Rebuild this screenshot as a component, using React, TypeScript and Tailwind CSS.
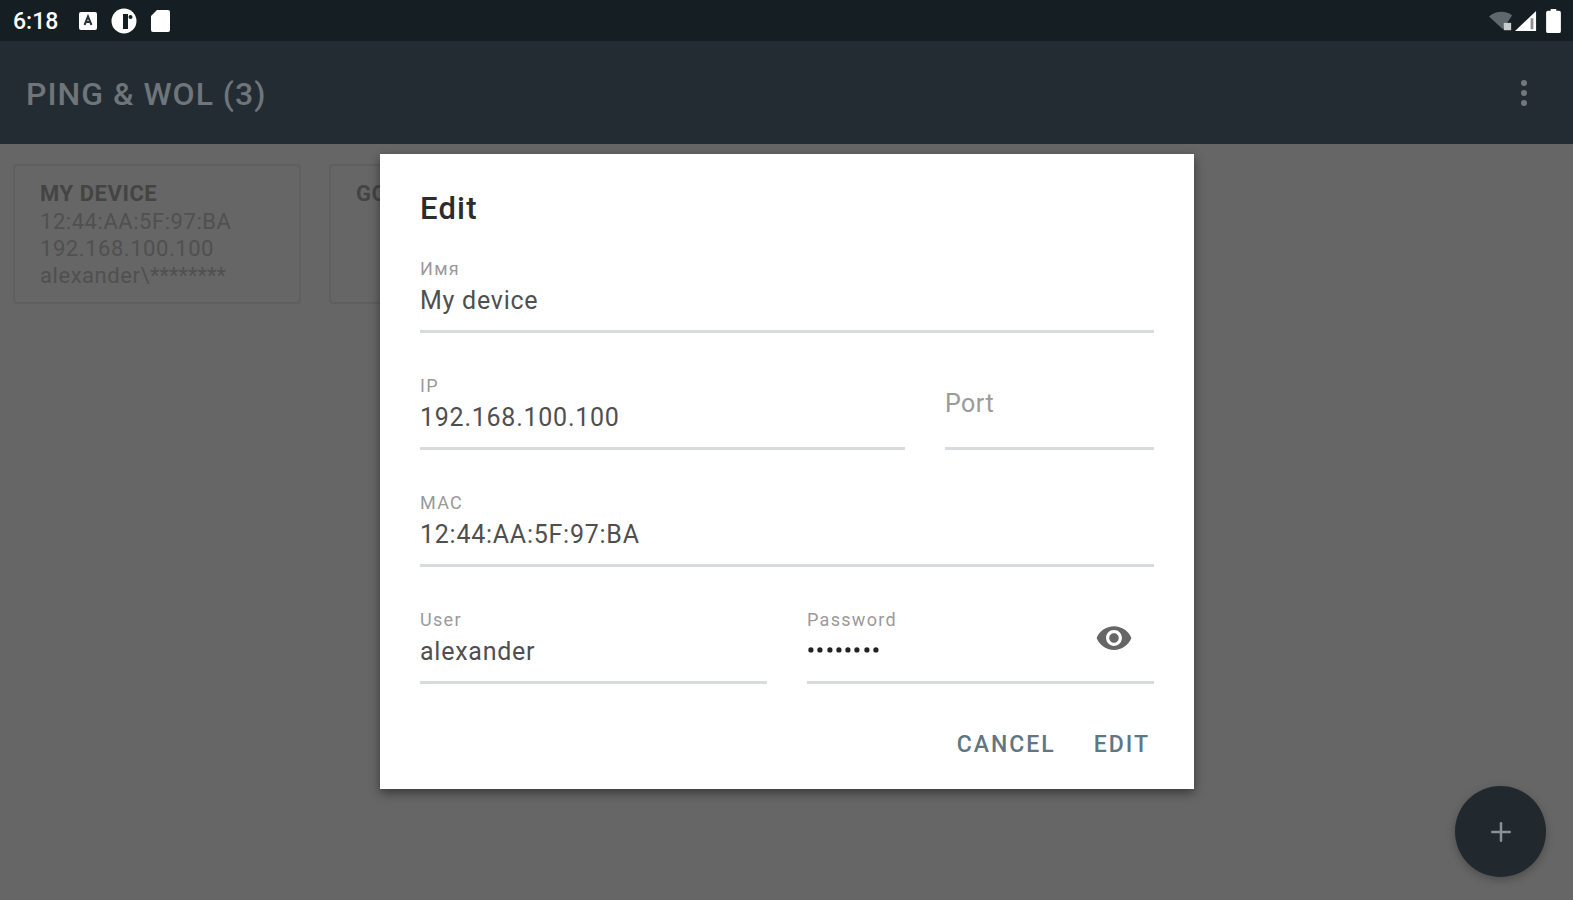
import { Plus } from "lucide-react";

interface FieldProps {
  label: string;
  value?: string;
  className?: string;
}

function Field({ label, value, className = "" }: FieldProps) {
  return (
    <div className={`flex flex-col border-b-[3px] border-[#d8dbdd] h-[75px] ${className}`}>
      {value ? (
        <>
          <span className="text-[18px] leading-[22px] tracking-[1.3px] text-[#9a9a9a]">{label}</span>
          <span className="mt-[3px] text-[25px] leading-[36px] tracking-[0.75px] text-[#4f4f4f]">{value}</span>
        </>
      ) : (
        <span className="mt-[11px] text-[25px] leading-[36px] tracking-[0.5px] text-[#9a9a9a]">{label}</span>
      )}
    </div>
  );
}

function DeviceCard({ children }: { children: React.ReactNode }) {
  return (
    <div className="w-[288px] h-[140px] shrink-0 rounded border-2 border-[#5f5f5f] pl-[25px] pt-[15px] text-[22px] leading-[27px] tracking-[0.55px] text-[#505050]">
      {children}
    </div>
  );
}

function StatusLeftIcons() {
  return (
    <div className="flex items-center gap-[14px] ml-[2px]">
      <svg width="18" height="18" viewBox="0 0 18 18">
        <rect x="0" y="0" width="18" height="18" rx="2" fill="#fff" />
        <path d="M5.5 13 9 4.5 12.500 13M7 10h4" stroke="#2b343a" strokeWidth="2" fill="none" />
      </svg>
      <svg width="26" height="26" viewBox="0 0 26 26">
        <circle cx="13" cy="13" r="12.500" fill="#fff" />
        <rect x="12" y="6" width="5" height="15" fill="#151e23" />
        <circle cx="19.500" cy="9" r="2" fill="#151e23" />
      </svg>
      <svg width="19" height="22" viewBox="0 0 19 22">
        <path d="M6 0h11a2 2 0 0 1 2 2v18a2 2 0 0 1-2 2H2a2 2 0 0 1-2-2V6z" fill="#fff" />
      </svg>
    </div>
  );
}

function StatusRightIcons() {
  return (
    <div className="flex items-center gap-[9px]">
      <svg width="24" height="22" viewBox="0 0 26 22" className="mr-[-7px]">
        <path d="M0 6C6 0 19 -1 25 5L15 20z" fill="#5f686c" />
        <rect x="16" y="13" width="8" height="8" fill="#c9cccd" />
      </svg>
      <svg width="22" height="22" viewBox="0 0 24 24">
        <path d="M23 1v22H0z" fill="#fff" />
        <rect x="17" y="9" width="3" height="12" fill="#8a8f91" />
      </svg>
      <svg width="15" height="24" viewBox="0 0 16 26">
        <path d="M5 0h6v2h3a2 2 0 0 1 2 2v20a2 2 0 0 1-2 2H2a2 2 0 0 1-2-2V4a2 2 0 0 1 2-2h3z" fill="#fff" />
      </svg>
    </div>
  );
}

export default function App() {
  return (
    <div className="relative h-[900px] overflow-hidden bg-[#666666] font-['Roboto',sans-serif]">
      <div className="flex h-[41px] items-center justify-between bg-[#151e23] pl-[13px] pr-[12px]">
        <div className="flex items-center gap-[19px]">
          <span className="pt-[3px] text-[23px] font-medium text-white">6:18</span>
          <StatusLeftIcons />
        </div>
        <StatusRightIcons />
      </div>

      <div className="flex h-[103px] items-center justify-between bg-[#232c33] pl-[26px] pr-[46px]">
        <h1 className="pt-[2px] text-[32px] font-medium tracking-[1px] text-[#6f7579]">PING &amp; WOL (3)</h1>
        <div className="flex flex-col gap-[4px]">
          <span className="size-[6px] rounded-full bg-[#72787b]" />
          <span className="size-[6px] rounded-full bg-[#72787b]" />
          <span className="size-[6px] rounded-full bg-[#72787b]" />
        </div>
      </div>

      <div className="flex gap-[28px] pl-[13px] pt-[20px]">
        <DeviceCard>
          <div className="mt-[-1px] font-bold text-[#444444]">MY DEVICE</div>
          <div className="mt-[1px]">12:44:AA:5F:97:BA</div>
          <div>192.168.100.100</div>
          <div>
            alexander\<span className="tracking-normal">********</span>
          </div>
        </DeviceCard>
        <DeviceCard>
          <div className="mt-[-1px] font-bold text-[#444444]">GOOGLE</div>
        </DeviceCard>
      </div>

      <div className="absolute left-[380px] top-[154px] flex h-[635px] w-[814px] flex-col bg-white px-10 shadow-[0_4px_10px_rgba(0,0,0,0.45)]">
        <h2 className="mt-[34px] text-[31px] font-medium leading-[42px] tracking-[1.2px] text-[#2c2c2c]">Edit</h2>
        <div className="mt-[28px] flex flex-col gap-[42px]">
          <Field label="Имя" value="My device" />
          <div className="flex gap-10">
            <Field label="IP" value="192.168.100.100" className="flex-1" />
            <Field label="Port" className="w-[209px]" />
          </div>
          <Field label="MAC" value="12:44:AA:5F:97:BA" />
          <div className="flex gap-10">
            <Field label="User" value="alexander" className="flex-1" />
            <div className="relative flex-1">
              <div className="flex h-[75px] flex-col border-b-[3px] border-[#d8dbdd]">
                <span className="text-[18px] leading-[22px] tracking-[1.3px] text-[#9a9a9a]">Password</span>
                <div className="mt-[15px] flex gap-[1.800px]">
                  {[0, 1, 2, 3, 4, 5, 6, 7].map((i) => (
                    <span key={i} className="size-[7.500px] scale-[0.65] rounded-full bg-[#222222]" />
                  ))}
                </div>
              </div>
              <svg
                width="38"
                height="38"
                viewBox="0 0 24 24"
                className="absolute right-[21px] top-[10px]"
              >
                <path
                  d="M12 4.500C7 4.500 2.730 7.610 1 12c1.730 4.390 6 7.500 11 7.500s9.270-3.110 11-7.500c-1.730-4.390-6-7.500-11-7.500zM12 17c-2.760 0-5-2.240-5-5s2.240-5 5-5 5 2.240 5 5-2.240 5-5 5zm0-8c-1.660 0-3 1.340-3 3s1.340 3 3 3 3-1.340 3-3-1.340-3-3-3z"
                  fill="#666666"
                />
              </svg>
            </div>
          </div>
        </div>
        <div className="mt-[44px] flex justify-end gap-[38px] pr-[4px] text-[23px] font-medium tracking-[2px] text-[#5f7783]">
          <span>CANCEL</span>
          <span>EDIT</span>
        </div>
      </div>

      <button className="absolute bottom-[23px] right-[27px] flex size-[91px] items-center justify-center rounded-full bg-[#21292e] text-[#8b9094] shadow-[0_3px_8px_rgba(0,0,0,0.25)]">
        <Plus size={30} strokeWidth={2} />
      </button>
    </div>
  );
}
